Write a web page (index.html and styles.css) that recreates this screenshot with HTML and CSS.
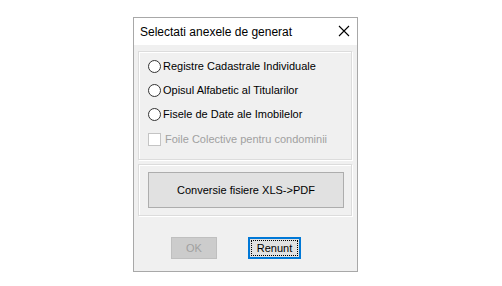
FILE: index.html
```html
<!DOCTYPE html>
<html>
<head>
<meta charset="utf-8">
<link rel="stylesheet" href="styles.css">
</head>
<body>
<div class="dialog">
  <div class="titlebar">
    <span class="title">Selectati anexele de generat</span>
    <svg class="close" width="12" height="12" viewBox="0 0 12 12"><path d="M1 1L11 11M11 1L1 11" stroke="#000" stroke-width="1.1" fill="none"/></svg>
  </div>
  <div class="content">
    <div class="group opts">
      <label class="opt"><span class="radio"></span>Registre Cadastrale Individuale</label>
      <label class="opt"><span class="radio"></span>Opisul Alfabetic al Titularilor</label>
      <label class="opt"><span class="radio"></span>Fisele de Date ale Imobilelor</label>
      <label class="opt disabled"><span class="check"></span>Foile Colective pentru condominii</label>
    </div>
    <div class="group conv">
      <div class="bigbtn">Conversie fisiere XLS-&gt;PDF</div>
    </div>
    <div class="actions">
      <div class="btn ok">OK</div>
      <div class="btn cancel"><span class="focus">Renunt</span></div>
    </div>
  </div>
</div>
</body>
</html>
```
FILE: styles.css
```css
html, body { margin: 0; padding: 0; background: #fff; }
body { padding: 17px 0 0 133px; font-family: "Liberation Sans", Arial, sans-serif; font-size: 11px; color: #000; }
.dialog { width: 223px; height: 253px; border: 1px solid #a8a8a8; background: #f0f0f0; display: flex; flex-direction: column; box-sizing: content-box; }
.titlebar { height: 27px; background: #fff; display: flex; align-items: center; justify-content: space-between; padding: 0 7px 0 6px; }
.title { font-size: 12px; font-family: "Liberation Sans", Arial, sans-serif; }
.close { display: block; margin-top: -1px; }
.content { padding: 6px 5px 0 4px; display: flex; flex-direction: column; }
.group { border: 1px solid #dcdcdc; box-shadow: inset 1px 1px 0 #fff, 1px 1px 0 #fff; }
.opts { height: 109px; padding: 8px 0 0 9px; box-sizing: border-box; display: flex; flex-direction: column; gap: 11px; }
.opt { display: flex; align-items: center; height: 13px; line-height: 13px; }
.opt.disabled { margin-top: 1px; }
.radio { width: 11px; height: 11px; border: 1px solid #333; border-radius: 50%; background: #fff; margin-right: 2px; flex: none; }
.check { width: 11px; height: 11px; border: 1px solid #c4c4c4; background: #fff; margin-right: 4px; flex: none; }
.disabled { color: #a0a0a0; }
.conv { margin-top: 4px; height: 52px; padding: 7px 0 0 9px; box-sizing: border-box; }
.bigbtn { width: 196px; height: 36px; box-sizing: border-box; border: 1px solid #adadad; background: #e1e1e1; display: flex; align-items: center; justify-content: center; }
.actions { display: flex; gap: 31px; padding: 21px 0 0 33px; }
.btn { height: 22px; box-sizing: border-box; display: flex; align-items: center; justify-content: center; }
.ok { width: 46px; border: 1px solid #bfbfbf; background: #cccccc; color: #a0a0a0; }
.cancel { width: 53px; border: 2px solid #0078d7; background: #e1e1e1; padding: 1px; }
.focus { flex: 1; align-self: stretch; display: flex; align-items: center; justify-content: center; outline: 1px dotted #000; outline-offset: -1px; }
```
